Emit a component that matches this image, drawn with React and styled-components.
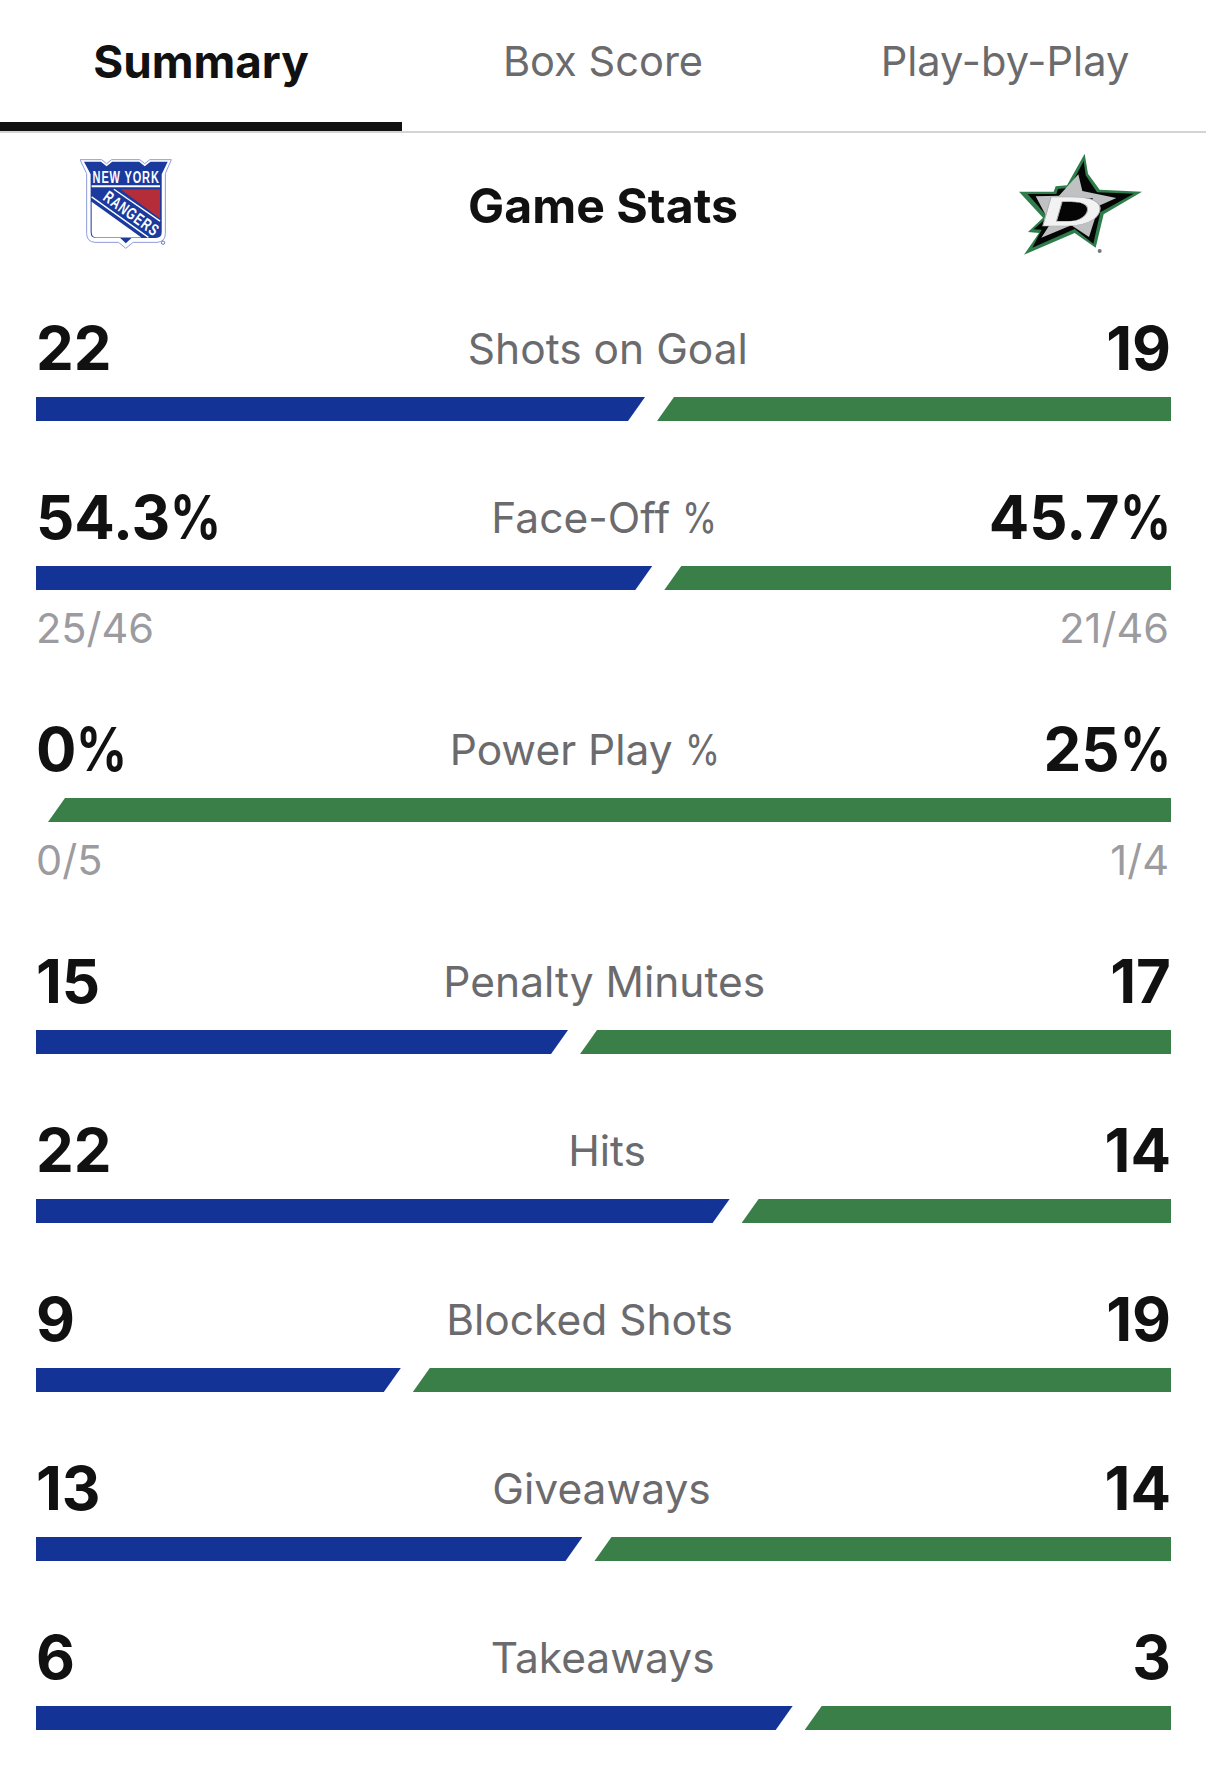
import React from 'react';
import styled, { createGlobalStyle } from 'styled-components';

const GlobalStyle = createGlobalStyle`
  html, body {
    margin: 0;
    padding: 0;
    background: #ffffff;
  }
  body {
    font-family: 'Inter', 'Liberation Sans', sans-serif;
  }
`;

const Page = styled.div`
  width: 1206px;
  min-height: 1777px;
  background: #ffffff;
`;

// Tabs
const TabBar = styled.nav`
  display: grid;
  grid-template-columns: repeat(3, 1fr);
  height: 133px;
  box-sizing: border-box;
  border-bottom: 2px solid #d4d4d6;
`;

const Tab = styled.div`
  display: flex;
  align-items: center;
  justify-content: center;
  height: 131px;
  box-sizing: border-box;
  padding-bottom: 9px;
  font-size: ${(p) => (p.$active ? '45.8px' : '41.6px')};
  font-weight: ${(p) => (p.$active ? 700 : 400)};
  color: ${(p) => (p.$active ? '#111111' : '#6b6b6e')};
  border-bottom: ${(p) => (p.$active ? '9px solid #111111' : '0')};
  ${(p) => p.$active && 'padding-bottom: 0;'}
`;

// Header with the two logos
const Header = styled.header`
  display: grid;
  grid-template-columns: 1fr auto 1fr;
  align-items: center;
  height: 144px;
  padding: 0 64px;
`;

const Title = styled.h2`
  margin: 0;
  font-size: 48.2px;
  font-weight: 700;
  color: #111111;
`;

const LogoLeft = styled.div`
  display: flex;
  justify-content: flex-start;
  padding: 0 0 4px 16px;
`;

const LogoRight = styled.div`
  display: flex;
  justify-content: flex-end;
  padding-bottom: 2px;
`;

// Stats
const StatList = styled.section`
  display: flex;
  flex-direction: column;
  gap: 66px;
  padding: 41px 35px 0 36px;
`;

const StatRow = styled.div`
  display: flex;
  flex-direction: column;
`;

const StatHead = styled.div`
  display: flex;
  align-items: center;
  justify-content: space-between;
  height: 60px;
  margin-bottom: 19px;
`;

const Value = styled.span`
  font-size: 60px;
  font-weight: 700;
  line-height: 60px;
  color: #111111;
`;

const Label = styled.span`
  padding: 1px 2px 0 0;
  font-size: 42.5px;
  font-weight: 400;
  color: #6b6b6e;
`;

// the percent sign is narrower in the reference than in Inter
const Percent = styled.span`
  display: inline-block;
  transform: scaleX(0.84);
  transform-origin: left center;
  margin-right: -0.16em;
`;

const Track = styled.div`
  display: flex;
  height: 24px;
`;

const HomeBar = styled.div`
  flex: none;
  background: #143397;
  clip-path: polygon(0 0, 100% 0, calc(100% - 17px) 100%, 0 100%);
`;

const AwayBar = styled.div`
  flex: 1;
  margin-left: 12px;
  background: #3a7f48;
  clip-path: polygon(17px 0, 100% 0, 100% 100%, 0 100%);
`;

const Detail = styled.div`
  display: flex;
  justify-content: space-between;
  height: 63px;
  box-sizing: border-box;
  padding: 14px 2px 0 0;
  font-size: 41.5px;
  line-height: 48px;
  color: #9b9ba0;
`;

const RangersLogo = () => (
  <svg width="93" height="93" viewBox="240 470 280 280">
    <path
      d="M240 478 H305 L320 490 L335 478 H420 L435 490 L450 478 H515 L497 520 V700 Q497 725 472 727 H400 L378 745 L356 727 H285 Q260 725 260 700 V520 Z"
      fill="#ffffff"
      stroke="#8f9cd8"
      strokeWidth="3"
    />
    <path
      d="M252 484 H303 L320 498 L337 484 H418 L435 498 L452 484 H504 L486 522 V696 Q486 714 468 714 H395 L378 730 L361 714 H288 Q272 714 272 696 V522 Z"
      fill="#1a3a9e"
    />
    <path d="M275 605 L425 712 H288 Q275 712 275 696 Z" fill="#ffffff" />
    <path d="M362 567 H481 V655 Z" fill="#b52d38" />
    <path d="M275 558 H481" stroke="#ffffff" strokeWidth="6" />
    <path d="M342 567 L481 663" stroke="#ffffff" strokeWidth="4" />
    <path d="M275 590 L446 712" stroke="#ffffff" strokeWidth="4" />
    <text
      transform="translate(278 549) scale(0.66 1)"
      fontFamily="'Liberation Sans', sans-serif"
      fontWeight="700"
      fontSize="50"
      letterSpacing="4"
      fill="#ffffff"
    >
      NEW YORK
    </text>
    <text
      transform="translate(306 597) rotate(36) scale(0.7 1)"
      fontFamily="'Liberation Sans', sans-serif"
      fontWeight="700"
      fontSize="50"
      letterSpacing="4"
      fill="#ffffff"
    >
      RANGERS
    </text>
    <circle cx="490" cy="728" r="5" fill="none" stroke="#1a3a9e" strokeWidth="2" />
  </svg>
);

const StarsLogo = () => (
  <svg width="123" height="103" viewBox="178 68 369 309">
    <polygon
      points="375,70 385,130 420,178 547,184 432,252 408,352 345,308 193,373 238,308 205,305 250,262 178,184 282,184 288,168 322,165"
      fill="#2f7d4a"
    />
    <polygon
      points="372,92 378,135 412,186 522,190 422,246 401,340 345,296 218,352 246,298 222,297 264,260 204,191 290,191 295,176 330,172"
      fill="#050505"
    />
    <polygon
      points="356,132 368,182 470,203 418,226 388,320 335,285 245,322 272,280 228,198 298,196"
      fill="#bfc1c3"
    />
    <polygon points="305,204 400,204 372,272 278,272" fill="#050505" />
    <text
      transform="translate(232 286) skewX(-16) scale(2.05 1)"
      fontFamily="'Liberation Sans', sans-serif"
      fontWeight="700"
      fontSize="126"
      fill="#f2f2f2"
      stroke="#a9abad"
      strokeWidth="1.5"
    >
      D
    </text>
    <circle cx="420" cy="362" r="6" fill="#777777" />
  </svg>
);

// splits a string so that its percent sign can be narrowed
const withPercent = (text) =>
  text.endsWith('%') ? (
    <>
      {text.slice(0, -1)}
      <Percent>%</Percent>
    </>
  ) : (
    text
  );

const stats = [
  { label: 'Shots on Goal', home: '22', away: '19', share: 22 / 41 },
  { label: 'Face-Off %', home: '54.3%', away: '45.7%', share: 0.543, homeDetail: '25/46', awayDetail: '21/46' },
  { label: 'Power Play %', home: '0%', away: '25%', share: 0, homeDetail: '0/5', awayDetail: '1/4' },
  { label: 'Penalty Minutes', home: '15', away: '17', share: 15 / 32 },
  { label: 'Hits', home: '22', away: '14', share: 22 / 36 },
  { label: 'Blocked Shots', home: '9', away: '19', share: 9 / 28 },
  { label: 'Giveaways', home: '13', away: '14', share: 13 / 27 },
  { label: 'Takeaways', home: '6', away: '3', share: 6 / 9 },
];

const App = () => {
  return (
    <Page>
      <GlobalStyle />
      <TabBar>
        <Tab $active>Summary</Tab>
        <Tab>Box Score</Tab>
        <Tab>Play-by-Play</Tab>
      </TabBar>

      <Header>
        <LogoLeft>
          <RangersLogo />
        </LogoLeft>
        <Title>Game Stats</Title>
        <LogoRight>
          <StarsLogo />
        </LogoRight>
      </Header>

      <StatList>
        {stats.map((stat) => (
          <StatRow key={stat.label}>
            <StatHead>
              <Value>{withPercent(stat.home)}</Value>
              <Label>{withPercent(stat.label)}</Label>
              <Value>{withPercent(stat.away)}</Value>
            </StatHead>
            <Track>
              <HomeBar style={{ width: `${stat.share * 100}%` }} />
              <AwayBar />
            </Track>
            {stat.homeDetail && (
              <Detail>
                <span>{stat.homeDetail}</span>
                <span>{stat.awayDetail}</span>
              </Detail>
            )}
          </StatRow>
        ))}
      </StatList>
    </Page>
  );
};

export default App;
